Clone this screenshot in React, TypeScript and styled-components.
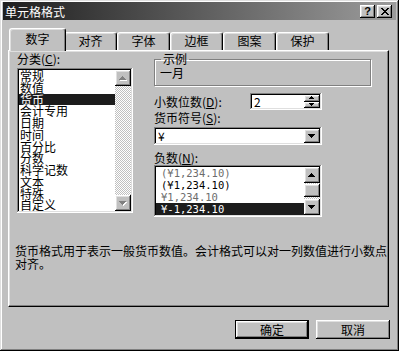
import React from 'react';
import styled, { createGlobalStyle, css } from 'styled-components';

const GlobalStyle = createGlobalStyle`
  html, body {
    margin: 0;
    padding: 0;
    background: #c0c0c0;
  }
  body {
    font-family: "Noto Sans CJK SC", "Liberation Sans", sans-serif;
    font-size: 12px;
    color: #000;
  }
  * {
    box-sizing: border-box;
  }
`;

// win98 bevels
const raised = css`
  background-color: #c0c0c0;
  box-shadow: inset -1px -1px #000, inset 1px 1px #fff, inset -2px -2px #808080, inset 2px 2px #dfdfdf;
`;

const sunken = css`
  background-color: #fff;
  box-shadow: inset -1px -1px #fff, inset 1px 1px #808080, inset -2px -2px #dfdfdf, inset 2px 2px #000;
`;

const Window = styled.div`
  width: 399px;
  height: 351px;
  padding: 2px 3px 3px 3px;
  display: flex;
  flex-direction: column;
  background: #c0c0c0;
  box-shadow: inset -1px -1px #000, inset 1px 1px #dfdfdf, inset -2px -2px #808080, inset 2px 2px #fff;
`;

const TitleBar = styled.div`
  height: 18px;
  display: flex;
  align-items: center;
  padding: 0 4px 0 2px;
  background: linear-gradient(to right, #1e1e1e, #9c9c9c);
`;

const TitleText = styled.div`
  flex: 1;
  color: #fff;
  font-size: 12px;
  line-height: 12px;
  margin-top: 2px;
`;

const CaptionButton = styled.div`
  width: 15px;
  height: 13px;
  margin-left: 2px;
  display: flex;
  align-items: center;
  justify-content: center;
  ${raised};
  font-family: "Liberation Sans", sans-serif;
  font-weight: bold;
  font-size: 11px;
  line-height: 11px;
`;

const TabRow = styled.div`
  height: 22px;
  margin-top: 8px;
  padding-left: 8px;
  display: flex;
  align-items: flex-end;
`;

const Tab = styled.div<{ $active?: boolean }>`
  position: relative;
  z-index: ${p => (p.$active ? 2 : 1)};
  width: ${p => (p.$active ? 57 : 53)}px;
  height: ${p => (p.$active ? 23 : 18)}px;
  margin: 0 ${p => (p.$active ? '-2px' : '0')} ${p => (p.$active ? '-1px' : '0')};
  padding-bottom: ${p => (p.$active ? 2 : 1)}px;
  display: flex;
  align-items: center;
  justify-content: center;
  background: #c0c0c0;
  border-top: 1px solid #fff;
  border-left: 1px solid #fff;
  border-right: 1px solid #000;
  border-radius: 3px 3px 0 0;
  box-shadow: inset -1px 0 #808080, inset 1px 1px #dfdfdf;
  font-size: 12px;
  line-height: 12px;
`;

const Panel = styled.div`
  height: 257px;
  margin: 0 7px 0 5px;
  padding: 1px 0 0 6px;
  display: flex;
  flex-direction: column;
  border-top: 1px solid #fff;
  border-left: 1px solid #fff;
  border-right: 1px solid #000;
  border-bottom: 1px solid #000;
  box-shadow: inset -1px -1px #808080, inset 1px 1px #dfdfdf;
`;

const Columns = styled.div`
  display: grid;
  grid-template-columns: 116px 217px;
  column-gap: 21px;
  padding-left: 2px;
`;

const Column = styled.div`
  display: flex;
  flex-direction: column;
`;

const Label = styled.div<{ $gap?: number }>`
  line-height: 14px;
  font-size: 12px;
  margin-top: ${p => p.$gap || 0}px;
  white-space: nowrap;
`;

const ListBox = styled.div<{ $height: number; $width?: number; $gap?: number }>`
  height: ${p => p.$height}px;
  width: ${p => (p.$width ? `${p.$width}px` : 'auto')};
  margin-top: ${p => p.$gap || 0}px;
  padding: 2px;
  display: flex;
  ${sunken};
`;

const Items = styled.div`
  flex: 1;
  min-width: 0;
  overflow: hidden;
`;

const Item = styled.div<{ $selected?: boolean; $muted?: boolean; $pad: number; $mono?: boolean }>`
  height: ${p => (p.$mono ? '12px' : '11.75px')};
  line-height: ${p => (p.$mono ? '12px' : '11.75px')};
  padding-left: ${p => p.$pad}px;
  white-space: nowrap;
  font-family: ${p => (p.$mono ? '"DejaVu Sans Mono", "Liberation Mono", monospace' : 'inherit')};
  font-size: ${p => (p.$mono ? '10.5px' : '12px')};
  background: ${p => (p.$selected ? '#1c1c1c' : 'transparent')};
  color: ${p => (p.$selected ? '#fff' : p.$muted ? '#6c6c6c' : '#000')};
`;

const ScrollBar = styled.div`
  width: 16px;
  display: flex;
  flex-direction: column;
  background-color: #fff;
  background-image: repeating-conic-gradient(#c0c0c0 0 25%, #fff 0 50%);
  background-size: 2px 2px;
`;

const ScrollButton = styled.div`
  height: 16px;
  flex: none;
  display: flex;
  align-items: center;
  justify-content: center;
  ${raised};
`;

const Track = styled.div`
  flex: 1;
`;

const Thumb = styled.div`
  height: 13px;
  margin-top: 1px;
  ${raised};
`;

const Sample = styled.fieldset`
  margin: 0;
  padding: 0 0 0 5px;
  min-width: 0;
  height: 34px;
  border: 1px solid #808080;
  box-shadow: inset 1px 1px #fff, 1px 1px #fff;
`;

const SampleLegend = styled.legend`
  margin-left: 1px;
  padding: 0 2px;
  font-size: 12px;
  line-height: 14px;
`;

const SampleText = styled.div`
  line-height: 14px;
`;

const SpinRow = styled.div`
  height: 17px;
  margin-top: 7px;
  display: flex;
  align-items: center;
`;

const SpinLabel = styled.div`
  width: 96px;
  line-height: 14px;
  white-space: nowrap;
`;

const SpinField = styled.div`
  width: 72px;
  height: 17px;
  padding: 2px;
  display: flex;
  ${sunken};
`;

const FieldValue = styled.div`
  flex: 1;
  padding-left: 2px;
  line-height: 13px;
  font-size: 12px;
`;

const SpinButtons = styled.div`
  width: 16px;
  display: flex;
  flex-direction: column;
`;

const SpinButton = styled.div`
  flex: 1;
  display: flex;
  align-items: center;
  justify-content: center;
  ${raised};
`;

const Combo = styled.div`
  width: 168px;
  height: 18px;
  margin-top: 2px;
  padding: 2px;
  display: flex;
  ${sunken};
`;

const DropButton = styled.div`
  width: 16px;
  display: flex;
  align-items: center;
  justify-content: center;
  ${raised};
`;

const Description = styled.div`
  width: 373px;
  margin-top: 27px;
  font-size: 12px;
  line-height: 13px;
`;

const ButtonRow = styled.div`
  margin: 13px 6px 0 0;
  display: flex;
  justify-content: flex-end;
  gap: 7px;
`;

const Button = styled.div<{ $default?: boolean }>`
  width: 74px;
  height: 19px;
  display: flex;
  align-items: center;
  justify-content: center;
  font-size: 12px;
  line-height: 12px;
  ${raised};
  ${p =>
    p.$default &&
    css`
      box-shadow: inset 0 0 0 1px #000, inset -2px -2px #000, inset 2px 2px #fff, inset -3px -3px #808080,
        inset 3px 3px #dfdfdf;
    `}
`;

// small pixel arrows
const Arrow = ({ dir, disabled, small }: { dir: 'up' | 'down'; disabled?: boolean; small?: boolean }) => {
  const up = small ? 'M2 0h1v1h1v1h1v1H0V2h1V1h1z' : 'M3 0h1v1h1v1h1v1h1v1H0V3h1V2h1V1h1z';
  const down = small ? 'M0 0h5v1H4v1H3v1H2V2H1V1H0z' : 'M0 0h7v1H6v1H5v1H4v1H3V3H2V2H1V1H0z';
  const w = small ? 5 : 7;
  const h = small ? 3 : 4;
  const d = dir === 'up' ? up : down;
  return (
    <svg width={w + 1} height={h + 1} viewBox={`0 0 ${w + 1} ${h + 1}`}>
      {disabled && <path d={d} fill="#fff" transform="translate(1 1)" />}
      <path d={d} fill={disabled ? '#808080' : '#000'} />
    </svg>
  );
};

const CloseGlyph = () => (
  <svg width="8" height="7" viewBox="0 0 8 7">
    <path
      d="M0 0h2v1H0z M6 0h2v1H6z M1 1h2v1H1z M5 1h2v1H5z M2 2h4v1H2z M3 3h2v1H3z M2 4h4v1H2z M1 5h2v1H1z M5 5h2v1H5z M0 6h2v1H0z M6 6h2v1H6z"
      fill="#000"
    />
  </svg>
);

const tabs = ['数字', '对齐', '字体', '边框', '图案', '保护'];

const categories = ['常规', '数值', '货币', '会计专用', '日期', '时间', '百分比', '分数', '科学记数', '文本', '特殊', '自定义'];

const negatives = [
  { text: '(¥1,234.10)', red: true },
  { text: '(¥1,234.10)', red: false },
  { text: '¥1,234.10', red: true },
  { text: '¥-1,234.10', red: false },
];

export default function App() {
  const selectedCategory = 2;
  const selectedNegative = 3;

  return (
    <>
      <GlobalStyle />
      <Window>
        <TitleBar>
          <TitleText>单元格格式</TitleText>
          <CaptionButton>?</CaptionButton>
          <CaptionButton>
            <CloseGlyph />
          </CaptionButton>
        </TitleBar>

        <TabRow>
          {tabs.map((t, i) => (
            <Tab key={t} $active={i === 0}>
              {t}
            </Tab>
          ))}
        </TabRow>

        <Panel>
          <Columns>
            <Column>
              <Label>
                分类(<u>C</u>):
              </Label>
              <ListBox $height={145} $gap={2}>
                <Items>
                  {categories.map((c, i) => (
                    <Item key={c} $pad={1} $selected={i === selectedCategory}>
                      {c}
                    </Item>
                  ))}
                </Items>
                <ScrollBar>
                  <ScrollButton>
                    <Arrow dir="up" disabled />
                  </ScrollButton>
                  <Track />
                  <ScrollButton>
                    <Arrow dir="down" disabled />
                  </ScrollButton>
                </ScrollBar>
              </ListBox>
            </Column>

            <Column>
              <Sample>
                <SampleLegend>示例</SampleLegend>
                <SampleText>一月</SampleText>
              </Sample>

              <SpinRow>
                <SpinLabel>
                  小数位数(<u>D</u>):
                </SpinLabel>
                <SpinField>
                  <FieldValue>2</FieldValue>
                  <SpinButtons>
                    <SpinButton>
                      <Arrow dir="up" small />
                    </SpinButton>
                    <SpinButton>
                      <Arrow dir="down" small />
                    </SpinButton>
                  </SpinButtons>
                </SpinField>
              </SpinRow>

              <Label $gap={1}>
                货币符号(<u>S</u>):
              </Label>
              <Combo>
                <FieldValue>¥</FieldValue>
                <DropButton>
                  <Arrow dir="down" />
                </DropButton>
              </Combo>

              <Label $gap={6}>
                负数(<u>N</u>):
              </Label>
              <ListBox $height={52} $width={168}>
                <Items>
                  {negatives.map((n, i) => (
                    <Item key={i} $pad={5} $mono $muted={n.red} $selected={i === selectedNegative}>
                      {n.text}
                    </Item>
                  ))}
                </Items>
                <ScrollBar>
                  <ScrollButton>
                    <Arrow dir="up" />
                  </ScrollButton>
                  <Track>
                    <Thumb />
                  </Track>
                  <ScrollButton>
                    <Arrow dir="down" />
                  </ScrollButton>
                </ScrollBar>
              </ListBox>
            </Column>
          </Columns>

          <Description>货币格式用于表示一般货币数值。会计格式可以对一列数值进行小数点对齐。</Description>
        </Panel>

        <ButtonRow>
          <Button $default>确定</Button>
          <Button>取消</Button>
        </ButtonRow>
      </Window>
    </>
  );
}
